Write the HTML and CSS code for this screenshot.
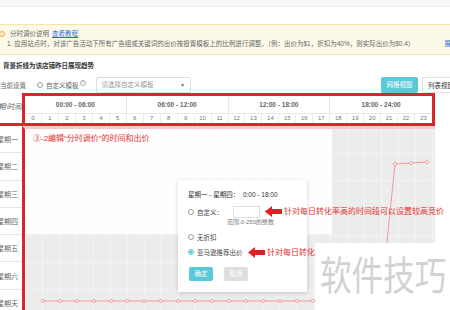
FILE: index.html
```html
<!DOCTYPE html>
<html lang="zh-CN">
<head>
	<meta charset="UTF-8">
	<title>分时调价</title>
	<link rel="stylesheet" href="styles.css">
</head>
<body>
	<div id="warp">
		<div class="topline"></div>
		<div class="notice">
			<p><i class="tip">i</i>分时调价说明 <a href="#">查看教程</a></p>
			<p class="desc">1. 应用站点时，对该广告活动下所有广告组或关键词的出价按投置模板上的比例进行调整。（例：出价为$1，折扣为40%，则实际出价为$0.4）<a class="more" href="#">展开</a></p>
		</div>
		<h3 class="trend">背景折线为该店铺昨日展现趋势</h3>
		<div class="toolbar">
			<span class="label">当前设置</span>
			<label class="radio"><i></i>自定义模板<sup class="help">?</sup></label>
			<div class="select">请选择自定义模板<span class="caret">▾</span></div>
			<ul class="views">
				<li class="on">网格视图</li>
				<li>列表视图</li>
			</ul>
		</div>
		<div class="schedule">
			<div class="days">
				<div class="day-head">星期\时间</div>
				<div class="day">星期一</div>
				<div class="day">星期二</div>
				<div class="day">星期三</div>
				<div class="day">星期四</div>
				<div class="day">星期五</div>
				<div class="day">星期六</div>
				<div class="day">星期天</div>
			</div>
			<div class="grid">
				<div class="hours-head">
					<div class="groups">
						<span>00:00 - 06:00</span>
						<span>06:00 - 12:00</span>
						<span>12:00 - 18:00</span>
						<span>18:00 - 24:00</span>
					</div>
					<div class="hours">
						<span>0</span><span>1</span><span>2</span><span>3</span><span>4</span><span>5</span>
						<span>6</span><span>7</span><span>8</span><span>9</span><span>10</span><span>11</span>
						<span>12</span><span>13</span><span>14</span><span>15</span><span>16</span><span>17</span>
						<span>18</span><span>19</span><span>20</span><span>21</span><span>22</span><span>23</span>
					</div>
				</div>
				<div class="grid-body">
					<!-- 昨日展现趋势 -->
					<svg class="chart" width="410" height="190" viewBox="0 0 410 190">
						<polyline points="18,172 35,172 52,172 69,172 86,172 102,172 119,172 136,172 153,172 170,172 187,172 204,172 221,172 238,172 255,172 272,172 288,172 305,172 322,172 339,171 356,171 370,35 386,34 402,33" fill="none" stroke="#f29a9a" stroke-width="1"/>
						<g fill="#fff" stroke="#f08c8c" stroke-width="0.8">
							<circle cx="18" cy="172" r="1.5"/><circle cx="35" cy="172" r="1.5"/><circle cx="52" cy="172" r="1.5"/>
							<circle cx="69" cy="172" r="1.5"/><circle cx="86" cy="172" r="1.5"/><circle cx="102" cy="172" r="1.5"/>
							<circle cx="119" cy="172" r="1.5"/><circle cx="136" cy="172" r="1.5"/><circle cx="153" cy="172" r="1.5"/>
							<circle cx="170" cy="172" r="1.5"/><circle cx="187" cy="172" r="1.5"/><circle cx="204" cy="172" r="1.5"/>
							<circle cx="221" cy="172" r="1.5"/><circle cx="238" cy="172" r="1.5"/><circle cx="255" cy="172" r="1.5"/>
							<circle cx="272" cy="172" r="1.5"/><circle cx="288" cy="172" r="1.5"/><circle cx="305" cy="172" r="1.5"/>
							<circle cx="370" cy="35" r="1.5"/><circle cx="386" cy="34" r="1.5"/><circle cx="402" cy="33" r="1.5"/>
						</g>
					</svg>
					<div class="mask"></div>
					<p class="step">③-2编辑“分时调价”的时间和出价</p>
					<div class="popup">
						<p class="range">星期一 - 星期四：&nbsp; 0:00 - 18:00</p>
						<div class="p-row custom">
							<label class="radio"><i></i>自定义：</label>
							<span class="input"></span>
							<span class="pct">%</span>
						</div>
						<p class="hint">范围:0-250的整数</p>
						<div class="p-row"><label class="radio"><i></i>无折扣</label></div>
						<div class="p-row"><label class="radio checked"><i></i>亚马逊推荐出价</label></div>
						<div class="btns">
							<span class="ok">确定</span>
							<span class="cancel">取消</span>
						</div>
					</div>
					<svg class="arrow arrow1" width="17" height="11" viewBox="0 0 17 11"><polygon points="0,5.5 7,0 7,3 17,3 17,8 7,8 7,11" fill="#e41f23"/></svg>
					<p class="red-tip tip1">针对每日转化率高的时间段可以设置较高竞价</p>
					<svg class="arrow arrow2" width="17" height="11" viewBox="0 0 17 11"><polygon points="0,5.5 7,0 7,3 17,3 17,8 7,8 7,11" fill="#e41f23"/></svg>
					<p class="red-tip tip2">针对每日转化</p>
					<div class="watermark"><span>软件技巧</span></div>
				</div>
			</div>
		</div>
	</div>
</body>
</html>
```

FILE: styles.css
```css
*{margin: 0;padding: 0;box-sizing: border-box;}
html,body{
	overflow: hidden;
}
body{
	width: 450px;
	height: 310px;
	background-color: #fff;
	font-family: "Liberation Sans", "Noto Sans CJK SC", sans-serif;
	font-size: 6.5px;
	color: #666;
}
li{
	list-style: none;
}
a{
	color: #2f6fd0;
}
#warp{
	width: 450px;
}
.topline{
	height: 7px;
	background-color: #f8f8f8;
	border-bottom: 1px solid #efefef;
}
/* 说明 */
.notice{
	width: 470px;
	margin: 17px 0 0 -6px;
	padding: 4px 0 5px 4px;
	line-height: 10px;
	background-color: #fdf9e9;
	border: 1px solid #f4e4ab;
}
.notice p{
	display: flex;
	align-items: center;
	white-space: nowrap;
}
.notice .tip{
	width: 6px;
	height: 6px;
	margin-right: 5px;
	border: 1px solid #f0a428;
	border-radius: 50%;
	font-size: 4px;
	line-height: 4px;
	text-align: center;
	font-style: normal;
	color: #f0a428;
}
.notice a{
	margin-left: 3px;
}
.notice .desc{
	padding-left: 8px;
}
.notice .desc .more{
	margin-left: 30px;
	text-decoration: none;
}
.trend{
	margin-top: 6px;
	padding-left: 3px;
	line-height: 10px;
	font-size: 6.5px;
	font-weight: 700;
	color: #333;
}
/* 工具栏 */
.toolbar{
	display: flex;
	align-items: center;
	width: 462px;
	height: 16px;
	margin-top: 6px;
}
.radio{
	display: flex;
	align-items: center;
	white-space: nowrap;
}
.radio i{
	width: 6px;
	height: 6px;
	margin-right: 3px;
	border: 1px solid #999;
	border-radius: 50%;
	background-color: #fff;
}
.radio.checked i{
	border-color: #5ac8d8;
	background: radial-gradient(circle, #5ac8d8 1.4px, #fff 1.8px);
}
.toolbar .radio{
	margin-left: 11px;
}
.toolbar .help{
	width: 6px;
	height: 6px;
	margin: -5px 0 0 1px;
	border: 0.8px solid #aaa;
	border-radius: 50%;
	font-size: 4px;
	line-height: 4.5px;
	text-align: center;
	color: #999;
}
.select{
	position: relative;
	width: 95px;
	height: 16px;
	margin-left: 10px;
	padding-left: 5px;
	line-height: 14px;
	color: #999;
	border: 1px solid #ddd;
	border-radius: 2px;
}
.select .caret{
	position: absolute;
	right: 6px;
	top: 0;
	font-size: 6px;
	color: #777;
}
.views{
	display: flex;
	margin-left: auto;
}
.views li{
	width: 40px;
	height: 16px;
	line-height: 16px;
	padding-left: 5px;
	color: #333;
	border: 1px solid #e3e3e3;
	border-right: none;
}
.views li.on{
	width: 37px;
	margin-right: 4px;
	padding-left: 0;
	text-align: center;
	color: #fff;
	background-color: #5ac8d8;
	border: none;
	border-radius: 2px;
}
/* 时间表 */
.schedule{
	display: flex;
}
.days{
	width: 22px;
	flex-shrink: 0;
	font-size: 7px;
}
.days .day-head,
.days .day{
	display: flex;
	justify-content: flex-end;
	align-items: center;
	white-space: nowrap;
}
.days .day-head{
	height: 33px;
	padding-bottom: 5px;
	border-bottom: 3px solid #d9262e;
}
.days .day{
	height: 27.3px;
	padding-right: 4px;
	border-bottom: 1px solid #e6e6e6;
}
.grid{
	width: 413px;
}
.hours-head{
	height: 33px;
	border: 3px solid #d9262e;
	color: #777;
}
.groups{
	display: grid;
	grid-template-columns: repeat(4, 1fr);
	height: 17px;
}
.groups span{
	line-height: 17px;
	text-align: center;
	font-weight: 700;
	color: #666;
	border-right: 1px solid #e8e8e8;
}
.groups span:last-child{
	border-right: none;
}
.hours{
	display: grid;
	grid-template-columns: repeat(24, 1fr);
	height: 10px;
	border-top: 1px solid #e8e8e8;
}
.hours span{
	line-height: 9px;
	text-align: center;
	font-size: 6px;
	border-right: 1px solid #eee;
}
.hours span:last-child{
	border-right: none;
}
.grid-body{
	position: relative;
	height: 200px;
	border-left: 3px solid #d9262e;
	border-top: 3px solid #f7c8cb;
	background-color: #ececec;
	background-image: linear-gradient(to right, #f4f4f4 1px, transparent 1px), linear-gradient(to bottom, #f4f4f4 1px, transparent 1px);
	background-size: 16.96px 100%, 100% 27.3px;
	background-position: 0 0, 0 24px;
}
.chart{
	position: absolute;
	left: 0;
	top: 0;
}
.mask{
	position: absolute;
	left: 0;
	top: 0;
	width: 307px;
	height: 105px;
	background-color: rgba(255, 255, 255, 0.94);
}
.step{
	position: absolute;
	left: 8px;
	top: 5px;
	font-size: 8px;
	line-height: 10px;
	color: #e5322d;
	white-space: nowrap;
}
/* 弹框 */
.popup{
	position: absolute;
	left: 153px;
	top: 51px;
	width: 129px;
	height: 112px;
	padding: 10px 0 0 10px;
	background-color: #fff;
	box-shadow: 0 1px 4px rgba(0, 0, 0, 0.18);
	color: #444;
}
.popup .range{
	line-height: 10px;
	white-space: nowrap;
	color: #333;
}
.p-row{
	display: flex;
	align-items: center;
	height: 10px;
	margin-top: 5px;
}
.p-row.custom{
	height: 12px;
	margin-top: 6px;
}
.p-row .input{
	width: 27px;
	height: 12px;
	margin-left: 10px;
	border: 1px solid #ddd;
}
.p-row .pct{
	margin-left: 5px;
	color: #888;
}
.popup .hint{
	padding-left: 39px;
	line-height: 8px;
	font-size: 6px;
	color: #777;
	white-space: nowrap;
}
.popup .hint + .p-row{
	margin-top: 6px;
}
.btns{
	display: flex;
	margin-top: 10px;
}
.btns span{
	width: 24px;
	height: 14px;
	line-height: 14px;
	text-align: center;
	color: #fff;
	border-radius: 2px;
}
.btns .ok{
	margin-left: 1px;
	background-color: #5ac8d8;
}
.btns .cancel{
	margin-left: 11px;
	background-color: #dedede;
}
/* 标注 */
.arrow{
	position: absolute;
}
.arrow1{
	left: 240px;
	top: 77px;
}
.arrow2{
	left: 223px;
	top: 118px;
}
.red-tip{
	position: absolute;
	font-size: 8px;
	line-height: 11px;
	color: #e5322d;
	white-space: nowrap;
}
.tip1{
	left: 259px;
	top: 77px;
}
.tip2{
	left: 242px;
	top: 118px;
}
.watermark{
	position: absolute;
	left: 290px;
	top: 114px;
	width: 135px;
	height: 80px;
	padding: 8px 0 0 5px;
	background-color: #fff;
	overflow: hidden;
}
.watermark span{
	display: block;
	font-family: "Noto Sans CJK SC", sans-serif;
	font-size: 40px;
	line-height: 44px;
	color: #d2d2d2;
	white-space: nowrap;
	transform: scaleX(0.79);
	transform-origin: left top;
}
```
